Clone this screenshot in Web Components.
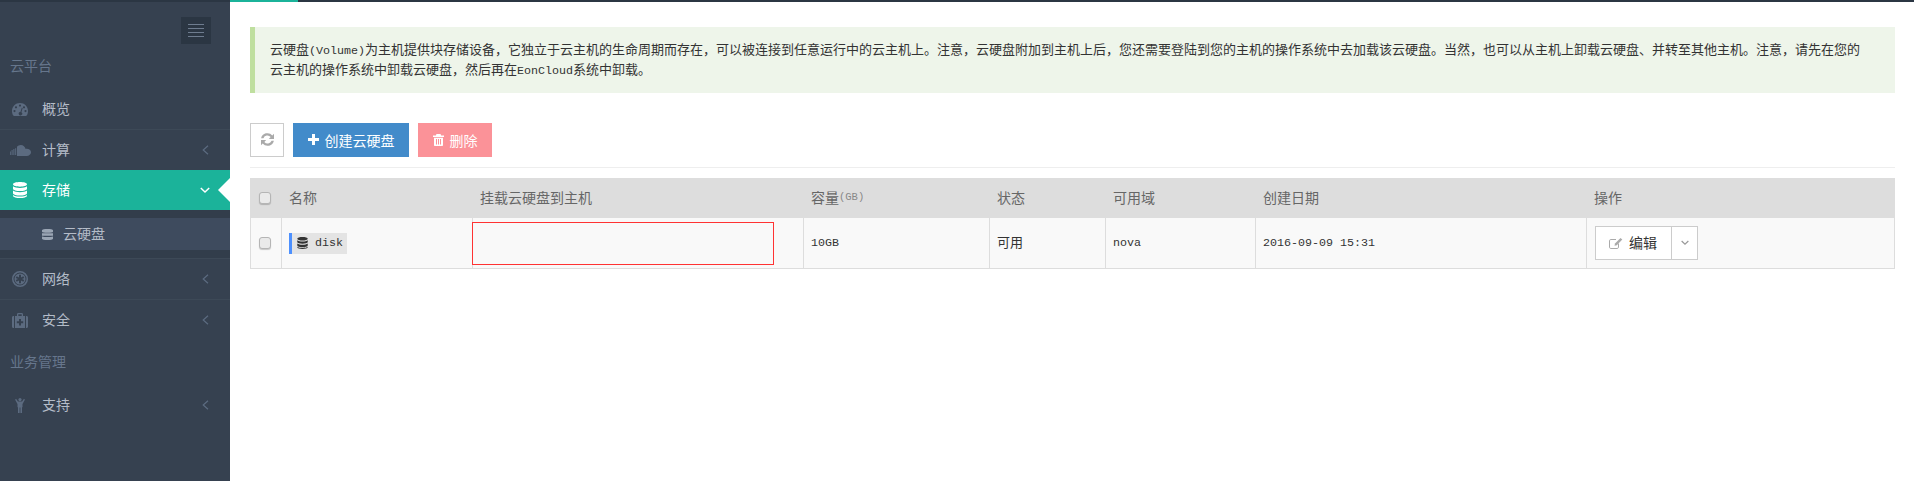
<!DOCTYPE html>
<html lang="zh">
<head>
<meta charset="utf-8">
<title>云硬盘</title>
<style>
    html, body { margin: 0; height: 100%; background: #fff; }
    body {
        display: flex;
        flex-direction: column;
        font: 14px "Noto Sans CJK SC", sans-serif;
        overflow: hidden;
    }
</style>
</head>
<body>
<top-stripe></top-stripe>
<app-layout>
    <side-nav slot="side">
        <nav-label>云平台</nav-label>
        <nav-item icon="gauge" divider>概览</nav-item>
        <nav-item icon="cloud" arrow>计算</nav-item>
        <nav-item icon="database" active>存储</nav-item>
        <nav-sub icon="server">云硬盘</nav-sub>
        <nav-item icon="network" arrow divider>网络</nav-item>
        <nav-item icon="medkit" arrow>安全</nav-item>
        <nav-label>业务管理</nav-label>
        <nav-item icon="person" arrow>支持</nav-item>
    </side-nav>
    <info-alert>云硬盘<lat-text>(Volume)</lat-text>为主机提供块存储设备，它独立于云主机的生命周期而存在，可以被连接到任意运行中的云主机上。注意，云硬盘附加到主机上后，您还需要登陆到您的主机的操作系统中去加载该云硬盘。当然，也可以从主机上卸载云硬盘、并转至其他主机。注意，请先在您的<br>云主机的操作系统中卸载云硬盘，然后再在<lat-text>EonCloud</lat-text>系统中卸载。</info-alert>
    <tool-bar></tool-bar>
    <volume-table></volume-table>
</app-layout>

<script>
// all icons are drawn by hand, keyed by name
const ICONS = {
    gauge: '<svg viewBox="0 0 16 13" width="16" height="13"><path fill-rule="evenodd" d="M8 0C3.6 0 0 3.5 0 8c0 1.800.5 3.400 1.300 4.600.2.300.5.400.8.400h11.800c.3 0 .6-.1.8-.4C15.500 11.400 16 9.800 16 8c0-4.500-3.600-8-8-8zM8 1.500a1.100 1.100 0 1 1 0 2.200 1.100 1.100 0 0 1 0-2.200zM4 3.200a1.100 1.100 0 1 1 0 2.200 1.100 1.100 0 0 1 0-2.200zM12 3.200a1.100 1.100 0 1 1 0 2.200 1.100 1.100 0 0 1 0-2.200zM2.500 7a1.100 1.100 0 1 1 0 2.200 1.100 1.100 0 0 1 0-2.200zM13.500 7a1.100 1.100 0 1 1 0 2.200 1.100 1.100 0 0 1 0-2.200zM9.800 4.800l.9.3-1.300 4.200a1.700 1.700 0 1 1-1-.3z"/></svg>',
    cloud: '<svg viewBox="0 0 21 11" width="21" height="11"><path d="M0 6.500h.8V10H0zM1.600 5h1v5h-1zM3.400 4h1v6h-1zM5.200 3.200h1V10h-1zM7 1.800C8 .7 9.300 0 10.800 0c2.400 0 4.400 1.700 4.800 4 .4-.1.700-.2 1.100-.2 2.400 0 4.300 1.500 4.300 3.500S19.100 11 16.700 11H7z"/></svg>',
    database: '<svg viewBox="0 0 14 16" width="14" height="16"><path d="M7 0c3.600 0 7 .8 7 2.300S10.600 4.700 7 4.700 0 3.800 0 2.300 3.400 0 7 0zM0 4.300C1.400 5.500 4.200 6 7 6s5.600-.5 7-1.700v2.400C14 8.100 10.600 9 7 9S0 8.100 0 6.700zM0 8.600C1.400 9.800 4.200 10.300 7 10.300s5.600-.5 7-1.700v2.600c0 1.400-3.400 2.300-7 2.300s-7-.9-7-2.300zM0 13c1.400 1 4.200 1.600 7 1.600s5.600-.6 7-1.600v.7C14 15.100 10.600 16 7 16s-7-.9-7-2.300z"/></svg>',
    server: '<svg viewBox="0 0 11 11" width="11" height="11"><path d="M5.500 0C8.500 0 11 .4 11 1.300v1.400C11 3.300 8.500 3.800 5.500 3.800S0 3.300 0 2.700V1.300C0 .4 2.500 0 5.500 0zM0 4.300h11v2.500H0zM0 7.400c1.300.5 3.300.7 5.500.7s4.200-.2 5.500-.7v2.300c0 .9-2.500 1.300-5.500 1.300S0 10.600 0 9.700z"/></svg>',
    network: '<svg viewBox="0 0 16 16" width="16" height="16"><path fill-rule="evenodd" d="M8 0a8 8 0 1 1 0 16A8 8 0 0 1 8 0zm0 1.500a6.500 6.500 0 1 0 0 13 6.500 6.500 0 0 0 0-13z"/><path d="M8 2.500a5.500 5.500 0 1 1 0 11 5.500 5.500 0 0 1 0-11z"/><path fill="#364150" d="M7 3.800h2v2.600l2.300-1.200 1 1.700L10 8l2.300 1.100-1 1.700L9 9.600v2.600H7V9.600l-2.300 1.200-1-1.700L6 8 3.700 6.900l1-1.700L7 6.400z"/></svg>',
    medkit: '<svg viewBox="0 0 16 15" width="16" height="15"><path fill-rule="evenodd" d="M3 3h2V1.300C5 .6 5.600 0 6.300 0h3.400C10.400 0 11 .6 11 1.300V3h2v12H3zM6.300 1.300V3h3.400V1.300zM7 6v2.300H4.800v2H7v2.200h2v-2.200h2.200v-2H9V6z"/><path d="M0 4.500C0 3.700.6 3 1.500 3H2v12h-.5C.6 15 0 14.300 0 13.500zM14 3h.5c.9 0 1.500.7 1.500 1.500v9c0 .8-.6 1.500-1.500 1.500H14z"/></svg>',
    person: '<svg viewBox="0 0 10 15" width="10" height="15"><circle cx="5" cy="1.600" r="1.600"/><path d="M0 1.500l1.200-.5L3 3.600h4L8.800 1l1.200.5L7.500 6v3.200H7V15H5.400V9.500h-.8V15H3V9.200h-.5V6z"/></svg>',
    left: '<svg viewBox="0 0 7 10" width="7" height="10"><path fill="none" stroke="currentColor" stroke-width="1.200" d="M6 .7L1.200 5 6 9.300"/></svg>',
    down: '<svg viewBox="0 0 10 7" width="10" height="7"><path fill="none" stroke="currentColor" stroke-width="1.500" d="M.8 1l4.200 4 4.200-4"/></svg>',
    refresh: '<svg viewBox="0 0 14 14" width="13" height="13"><path d="M12.200 2.600L14 .8v5.600H8.400l2-2A4.600 4.600 0 0 0 2.600 5.600H.1A7 7 0 0 1 12.200 2.600z"/><path d="M1.800 11.400L0 13.200V7.600h5.600l-2 2a4.600 4.600 0 0 0 7.800-1.200h2.500A7 7 0 0 1 1.800 11.400z"/></svg>',
    plus: '<svg viewBox="0 0 11 11" width="11" height="11"><path d="M4 0h3v4h4v3H7v4H4V7H0V4h4z"/></svg>',
    trash: '<svg viewBox="0 0 11 12" width="11" height="12"><path fill-rule="evenodd" d="M3.500 0h4l.7 1.600H11V3H0V1.600h2.800zM1 3.700h9V11c0 .6-.4 1-1 1H2c-.6 0-1-.4-1-1zM3 5v5.500h1V5zm2 0v5.500h1V5zm2 0v5.500h1V5z"/></svg>',
    edit: '<svg viewBox="0 0 14 12" width="14" height="12"><path fill="none" stroke="currentColor" d="M9.500 6.500v3.700c0 .7-.5 1.300-1.300 1.300H1.800C1 11.500.5 11 .5 10.200V3.800C.5 3 1 2.500 1.800 2.500H7"/><path d="M11.500 1l1.800 1.600L7.800 8.200 5.500 8.800l.5-2.300z"/></svg>'
};

function define(name, css, html, setup) {
    customElements.define(name, class extends HTMLElement {
        constructor() {
            super();
            this.attachShadow({ mode: 'open' });
        }
        connectedCallback() {
            const markup = typeof html === 'function' ? html(this) : html;
            this.shadowRoot.innerHTML = `<style>${css}</style>${markup}`;
            if (setup) setup(this);
        }
    });
}

define('lat-text', `
    :host { font-family: "Liberation Mono", monospace; font-size: 11.67px; }
`, '<slot></slot>');

define('top-stripe', `
    :host { display: flex; height: 2px; flex: none; background: #2b3643; }
    i { display: block; width: 68px; margin-left: 230px; background: #1bb39a; }
`, '<i></i>');

define('app-layout', `
    :host { display: flex; flex: 1; min-height: 0; }
    main { flex: 1; min-width: 0; padding: 25px 19px 0 20px; }
`, '<slot name="side"></slot><main><slot></slot></main>');

define('side-nav', `
    :host { display: block; width: 230px; flex: none; background: #364150; }
    .bar { display: flex; justify-content: flex-end; padding: 15px 19px 0 0; }
    .toggle {
        width: 30px; height: 27px; background: #2b3643;
        display: flex; flex-direction: column; justify-content: center; gap: 3px; align-items: center;
    }
    .toggle i { display: block; width: 16px; height: 1px; background: #6e7c8f; }
`, `<div class="bar"><div class="toggle"><i></i><i></i><i></i><i></i></div></div><slot></slot>`);

define('nav-label', `
    :host {
        display: flex; align-items: center; height: 45px; padding-left: 10px;
        color: #66768c; font-size: 14px;
    }
    span { padding-bottom: 3px; }
`, '<span><slot></slot></span>');

define('nav-item', `
    :host {
        display: flex; align-items: center; height: 40px; position: relative;
        color: #b4bcc8; font-size: 14px;
    }
    :host([divider]) { border-bottom: 1px solid #3d4957; }
    :host([active]) { background: #1bb39a; color: #fff; }
    .icon { width: 42px; display: flex; justify-content: center; padding-right: 2px; box-sizing: border-box; fill: #5c6b80; }
    :host([active]) .icon { fill: #fff; }
    .text { flex: 1; padding-bottom: 2px; }
    .arrow { width: 14px; margin-right: 18px; display: flex; justify-content: center; color: #5c6b80; }
    :host([active]) .arrow { color: #fff; }
    .tip {
        position: absolute; right: 0; top: 8px; width: 0; height: 0;
        border: 12px solid transparent; border-left-width: 0; border-right-color: #fff;
    }
`, el => `
    <span class="icon">${ICONS[el.getAttribute('icon')]}</span>
    <span class="text"><slot></slot></span>
    ${el.hasAttribute('arrow') ? `<span class="arrow">${ICONS.left}</span>` : ''}
    ${el.hasAttribute('active') ? `<span class="arrow">${ICONS.down}</span><span class="tip"></span>` : ''}
`);

define('nav-sub', `
    :host {
        display: block; padding: 8px 0; background: #323d4b;
        border-bottom: 1px solid #3d4957; color: #b4bcc8; font-size: 14px;
    }
    .row { display: flex; align-items: center; height: 32px; background: #3e4b5e; padding-left: 42px; }
    .icon { display: flex; width: 21px; fill: #9aa5b4; }
    .text { padding-bottom: 2px; }
`, el => `<div class="row"><span class="icon">${ICONS[el.getAttribute('icon')]}</span><span class="text"><slot></slot></span></div>`);

define('info-alert', `
    :host {
        display: block; box-sizing: border-box; height: 66px;
        padding: 13px 15px 0 15px;
        background: #eef5ea; border-left: 5px solid #bfdf9f;
        color: #333; font-size: 13px; line-height: 18px; white-space: nowrap;
    }
`, '<slot></slot>');

define('tool-bar', `
    :host {
        display: flex; gap: 9px; margin-top: 30px; padding-bottom: 10px;
        border-bottom: 1px solid #eee;
    }
    button {
        display: flex; align-items: center; justify-content: center; gap: 6px;
        height: 34px; box-sizing: border-box; padding: 0 0 1px; border: 0; color: #fff;
        font: 14px "Noto Sans CJK SC", sans-serif; fill: #fff;
    }
    .refresh { width: 34px; background: #fff; border: 1px solid #ccc; fill: #aaa; }
    .create { width: 116px; background: #428bca; }
    .del { width: 74px; background: #fb9298; }
`, () => `
    <button class="refresh">${ICONS.refresh}</button>
    <button class="create">${ICONS.plus}创建云硬盘</button>
    <button class="del">${ICONS.trash}删除</button>
`);

define('check-box', `
    :host {
        display: block; width: 12px; height: 12px; box-sizing: border-box;
        border: 1px solid #b5b5b5; border-radius: 3px; background: #eaeaea;
        box-shadow: 0 1px 1px rgba(0,0,0,.2);
    }
`, '');

define('volume-table', `
    :host {
        display: grid; margin-top: 10px;
        grid-template-columns: 31px 191px 331px 186px 116px 150px 331px 309px;
        grid-template-rows: 40px 51px;
        font-size: 13px;
    }
    .th, .td {
        display: flex; align-items: center; box-sizing: border-box;
        padding-left: 7px; border-left: 1px solid transparent;
    }
    .th { background: #ddd; color: #666; font-size: 14px; padding-bottom: 2px; }
    .th lat-text { font-size: 10.5px; }
    .td { background: #f9f9f9; color: #333; border-left-color: #ddd; border-bottom: 1px solid #ddd; }
    .td:last-child { border-right: 1px solid #ddd; }
    .box { padding-left: 8px; padding-bottom: 0; }
    .chip {
        display: flex; align-items: center; height: 21px; width: 58px; box-sizing: border-box;
        background: #e4e4e4; border-left: 3px solid #4d90fe; padding-left: 5px; gap: 7px; fill: #333;
    }
    .td.host { padding: 4px 0 0; align-items: flex-start; }
    .red { width: 302px; height: 43px; margin-left: -1px; box-sizing: border-box; border: 1px solid #f33; }
    .up { padding-bottom: 3px; }
    .btn { display: flex; height: 34px; box-sizing: border-box; margin-left: 1px; background: #fff; border: 1px solid #ccc; color: #333; font-size: 14px; }
    .btn .main { display: flex; align-items: center; width: 75px; box-sizing: border-box; padding-left: 13px; gap: 6px; color: #aaa; fill: #aaa; }
    .btn .main span { color: #333; padding-bottom: 2px; }
    .btn .drop { display: flex; align-items: center; justify-content: center; width: 25px; border-left: 1px solid #ccc; color: #999; }
    .small { color: #888; }
`, () => `
    <div class="th box"><check-box></check-box></div>
    <div class="th">名称</div>
    <div class="th">挂载云硬盘到主机</div>
    <div class="th">容量<lat-text class="small">(GB)</lat-text></div>
    <div class="th">状态</div>
    <div class="th">可用域</div>
    <div class="th">创建日期</div>
    <div class="th">操作</div>

    <div class="td box"><check-box></check-box></div>
    <div class="td"><span class="chip">${ICONS.database.replace(/width="14" height="16"/, 'width="11" height="12"')}<lat-text>disk</lat-text></span></div>
    <div class="td host"><div class="red"></div></div>
    <div class="td"><lat-text>10GB</lat-text></div>
    <div class="td up">可用</div>
    <div class="td"><lat-text>nova</lat-text></div>
    <div class="td"><lat-text>2016-09-09 15:31</lat-text></div>
    <div class="td">
        <div class="btn">
            <div class="main">${ICONS.edit}<span>编辑</span></div>
            <div class="drop">${ICONS.down.replace('width="10" height="7"', 'width="8" height="6"')}</div>
        </div>
    </div>
`);
</script>
</body>
</html>
